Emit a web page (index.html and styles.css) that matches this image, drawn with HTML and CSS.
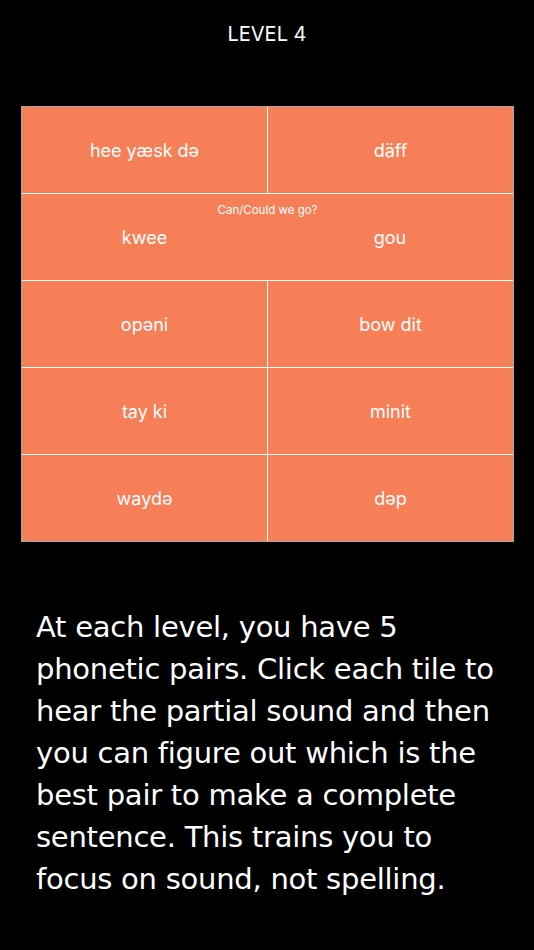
FILE: index.html
```html
<!DOCTYPE html>
<html>
<head>
    <meta charset="UTF-8">
    <meta name="viewport" content="width=device-width, initial-scale=1.0">
    <title>Level 4</title>
    <link rel="stylesheet" href="styles.css">
</head>
<body>

    <div class="title">LEVEL 4</div>

    <div class="board">
        <div class="row">
            <div class="tile">hee yæsk də</div>
            <div class="tile">däff</div>
        </div>
        <div class="row solved">
            <div class="hint">Can/Could we go?</div>
            <div class="tile">kwee</div>
            <div class="tile">gou</div>
        </div>
        <div class="row">
            <div class="tile">opəni</div>
            <div class="tile">bow dit</div>
        </div>
        <div class="row">
            <div class="tile">tay ki</div>
            <div class="tile">minit</div>
        </div>
        <div class="row">
            <div class="tile">waydə</div>
            <div class="tile">dəp</div>
        </div>
    </div>

    <p class="help">
        At each level, you have 5<br>
        phonetic pairs. Click each tile to<br>
        hear the partial sound and then<br>
        you can figure out which is the<br>
        best pair to make a complete<br>
        sentence. This trains you to<br>
        focus on sound, not spelling.
    </p>

</body>
</html>
```

FILE: styles.css
```css
body {
    margin: 0;
    padding: 0;
    background-color: #000;
    color: #fff;
    font-family: Inter, "Liberation Sans", sans-serif;
}

.title {
    height: 68px;
    display: flex;
    justify-content: center;
    align-items: center;
    font-size: 20px;
}

.board {
    margin: 38px 0 0 21px;
    width: 491px;
    border: 1px solid #a8a8a8;
    background-color: #f67f58;
}

.row {
    display: grid;
    grid-template-columns: 245px 1fr;
    height: 86px;
    border-top: 1px solid #fff;
}

.row:first-child {
    border-top: none;
}

.tile {
    display: flex;
    justify-content: center;
    align-items: center;
    font-size: 18px;
}

.tile + .tile {
    border-left: 1px solid #fff;
}

.row.solved {
    grid-template-rows: 23px 40px;
}

.row.solved .hint {
    grid-column: 1 / 3;
    display: flex;
    justify-content: center;
    align-items: flex-end;
    font-size: 11.5px;
}

.row.solved .tile + .tile {
    border-left: none;
}

.help {
    margin: 64px 0 0 36px;
    font-family: "DejaVu Sans", sans-serif;
    font-size: 29px;
    letter-spacing: -0.25px;
    line-height: 42px;
}
```
